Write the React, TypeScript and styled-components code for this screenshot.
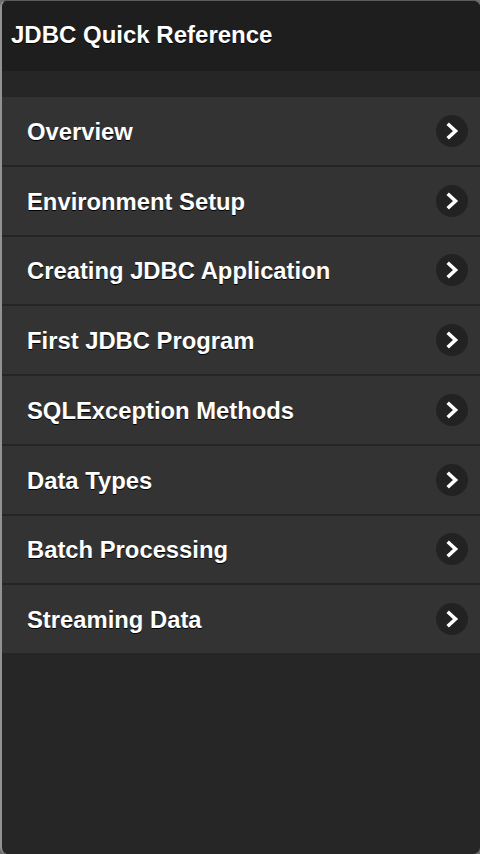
import React from "react";
import styled, { createGlobalStyle } from "styled-components";

const Global = createGlobalStyle`
  html, body { margin: 0; padding: 0; background: #6e6e6e; }
  #root { height: 854px; }
`;

const Frame = styled.div`
  box-sizing: border-box;
  width: 480px;
  height: 854px;
  display: flex;
  flex-direction: column;
  background: #262626;
  border-left: 2px solid #929292;
  border-top: 1px solid #5a5a5a;
  border-radius: 7px;
  overflow: hidden;
  font-family: "Liberation Sans", Arial, sans-serif;
`;

const Header = styled.header`
  height: 70px;
  flex: none;
  display: flex;
  align-items: center;
  padding: 0 0 0 9px;
  background: #1e1e1e;
`;

const Title = styled.h1`
  margin: 0;
  font-size: 24px;
  font-weight: bold;
  color: #fff;
  text-shadow: 0 1px 0 #000;
  transform: translateY(-1px);
`;

const Spacer = styled.div`
  height: 26px;
  flex: none;
  background: #262626;
`;

const List = styled.ul`
  list-style: none;
  margin: 0;
  padding: 0;
  display: flex;
  flex-direction: column;
`;

const Item = styled.li`
  box-sizing: border-box;
  height: 69.75px;
  flex: none;
  display: flex;
  align-items: center;
  justify-content: space-between;
  padding: 0 12px 0 25px;
  background: #333333;
  border-bottom: 2px solid #252525;
`;

const Label = styled.span`
  font-size: 23.8px;
  font-weight: bold;
  color: #fff;
  text-shadow: 0 1px 0 #000;
  transform: translateY(1px);
`;

const Arrow = styled.span`
  width: 32px;
  height: 32px;
  border-radius: 50%;
  background: #222222;
  display: flex;
  align-items: center;
  justify-content: center;
`;

const items = [
  "Overview",
  "Environment Setup",
  "Creating JDBC Application",
  "First JDBC Program",
  "SQLException Methods",
  "Data Types",
  "Batch Processing",
  "Streaming Data",
];

export default function App() {
  return (
    <>
      <Global />
      <Frame>
        <Header>
          <Title>JDBC Quick Reference</Title>
        </Header>
        <Spacer />
        <List>
          {items.map((t) => (
            <Item key={t}>
              <Label>{t}</Label>
              <Arrow>
                <svg width="16" height="18" viewBox="0 0 16 18">
                  <polyline
                    points="5,3 11.5,9 5,15"
                    fill="none"
                    stroke="#fff"
                    strokeWidth="3.6"
                    strokeLinecap="square"
                    strokeLinejoin="miter"
                  />
                </svg>
              </Arrow>
            </Item>
          ))}
        </List>
      </Frame>
    </>
  );
}
